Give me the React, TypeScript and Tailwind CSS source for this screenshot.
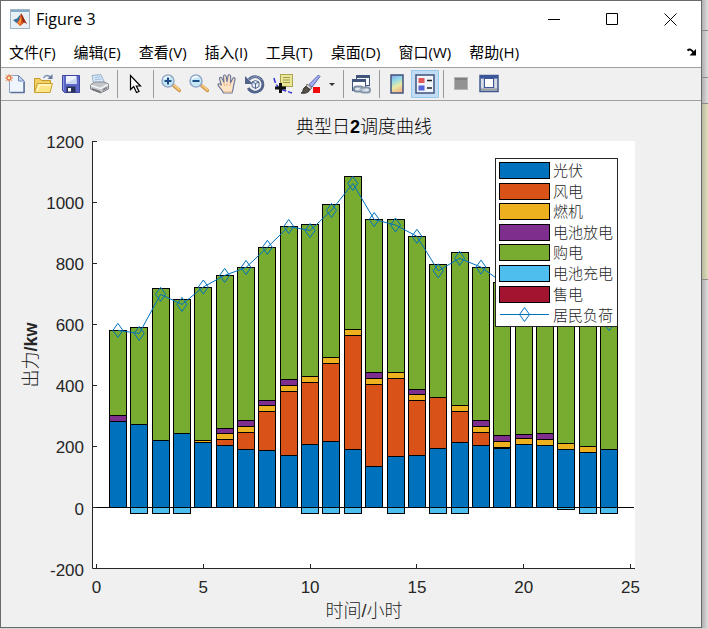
import type { ReactNode } from 'react';

const MENUS = ['文件(F)', '编辑(E)', '查看(V)', '插入(I)', '工具(T)', '桌面(D)', '窗口(W)', '帮助(H)'];

const COLORS = {
  pv: '#0072bd',
  wind: '#d95319',
  gas: '#edb120',
  discharge: '#7e2f8e',
  buy: '#77ac30',
  charge: '#4dbeee',
  sell: '#a2142f',
};

// [pv, wind, gas, discharge, buy, charge] in kW, one row per hour
const HOURS = [
  [282, 0, 0, 20, 278, 0],
  [272, 0, 0, 0, 317, 20],
  [219, 0, 0, 0, 498, 20],
  [242, 0, 0, 0, 439, 20],
  [213, 0, 6, 0, 501, 0],
  [203, 20, 20, 16, 501, 0],
  [190, 56, 20, 20, 501, 0],
  [187, 127, 20, 16, 501, 0],
  [170, 210, 20, 20, 500, 0],
  [206, 203, 20, 0, 498, 20],
  [216, 256, 20, 0, 501, 20],
  [190, 373, 20, 0, 501, 20],
  [134, 269, 20, 20, 501, 0],
  [167, 255, 20, 0, 501, 20],
  [170, 180, 20, 16, 501, 0],
  [193, 167, 0, 0, 436, 20],
  [213, 101, 20, 0, 501, 20],
  [203, 43, 20, 20, 501, 0],
  [193, 3, 20, 20, 501, 0],
  [206, 0, 20, 14, 501, 0],
  [203, 0, 20, 20, 501, 0],
  [190, 0, 20, 0, 501, 7],
  [180, 0, 20, 0, 470, 20],
  [190, 0, 0, 0, 430, 20],
];

const LOAD = [
  580, 570, 698, 665, 722, 760, 786, 852, 920, 907, 973, 1061, 943, 925, 888, 775, 816, 787, 737, 741, 743, 704, 650,
  602,
];

const STACK = [COLORS.pv, COLORS.wind, COLORS.gas, COLORS.discharge, COLORS.buy];

const LEGEND = [
  { name: '光伏', color: COLORS.pv },
  { name: '风电', color: COLORS.wind },
  { name: '燃机', color: COLORS.gas },
  { name: '电池放电', color: COLORS.discharge },
  { name: '购电', color: COLORS.buy },
  { name: '电池充电', color: COLORS.charge },
  { name: '售电', color: COLORS.sell },
];

const px = (hour: number) => 95.5 + hour * 21.36;
const py = (kw: number) => 406.5 - kw * 0.3054;
const snap = (v: number) => Math.floor(v) + 0.5;

const Diamond = ({ x, y }: { x: number; y: number }) => (
  <path d={`M${x} ${y - 7}l5 7l-5 7l-5 -7z`} fill="none" stroke="#0072bd" strokeWidth="1" />
);

const Bar = ({ hour, values }: { hour: number; values: number[] }) => {
  const left = snap(px(hour) - 8.5);
  const charge = values[5];
  let total = 0;
  return (
    <g stroke="#000" strokeWidth="1">
      {STACK.map((color, i) => {
        if (!values[i]) return null;
        const bottom = snap(py(total));
        total += values[i];
        const top = snap(py(total));
        return <rect key={color} x={left} y={top} width="17" height={bottom - top} fill={color} />;
      })}
      {charge > 0 && (
        <rect x={left} y="406.5" width="17" height={snap(py(-charge)) - 406.5} fill={COLORS.charge} />
      )}
    </g>
  );
};

const Chart = () => (
  <svg
    viewBox="0 0 700 526"
    className="block w-full h-auto font-['Liberation_Sans','Noto_Sans_CJK_SC',sans-serif]"
    role="img"
    aria-label="典型日2调度曲线"
  >
    <rect x="92" y="40" width="542" height="428" fill="#fff" />
    {HOURS.map((values, i) => (
      <Bar key={i} hour={i + 1} values={values} />
    ))}
    <path d="M91.5 406.5H633" stroke="#000" />
    <g stroke="#262626" fill="none">
      <path d="M91.5 40V467.5H634" />
      {[0, 5, 10, 15, 20, 25].map((t) => (
        <path key={t} d={`M${snap(px(t))} 467v-4`} />
      ))}
      {[0, 200, 400, 600, 800, 1000, 1200].map((t) => (
        <path key={t} d={`M92 ${snap(py(t))}h4`} />
      ))}
    </g>
    <polyline
      points={LOAD.map((v, i) => `${px(i + 1)},${py(v)}`).join(' ')}
      fill="none"
      stroke="#0072bd"
      strokeWidth="1"
    />
    {LOAD.map((v, i) => (
      <Diamond key={i} x={px(i + 1)} y={py(v)} />
    ))}

    <g fill="#262626" fontSize="17">
      {[0, 5, 10, 15, 20, 25].map((t) => (
        <text key={t} x={px(t)} y="492" textAnchor="middle">
          {t}
        </text>
      ))}
      {[-200, 0, 200, 400, 600, 800, 1000, 1200].map((t) => (
        <text key={t} x="83" y={py(t) + 7} textAnchor="end">
          {t}
        </text>
      ))}
    </g>
    <text x="363" y="32" textAnchor="middle" fontSize="18" fontWeight="300" fill="#000">
      典型日<tspan fontWeight="bold">2</tspan>调度曲线
    </text>
    <text x="363" y="516" textAnchor="middle" fontSize="18" fontWeight="300" fill="#262626">
      时间/小时
    </text>
    <text transform="translate(36 254) rotate(-90)" textAnchor="middle" fontSize="18" fontWeight="300" fill="#262626">
      出力<tspan fontWeight="bold">/kw</tspan>
    </text>

    <rect x="494.5" y="57.5" width="122" height="168" fill="#fff" stroke="#262626" />
    {LEGEND.map((item, i) => {
      const y = Math.round(i * 20.6);
      return (
        <g key={item.name}>
          <rect x="498.5" y={61.5 + y} width="50" height="16" fill={item.color} stroke="#000" />
          <text x="552" y={75 + y} fontSize="15" fontWeight="300" fill="#262626">
            {item.name}
          </text>
        </g>
      );
    })}
    <path d="M499 213.5H548" stroke="#0072bd" />
    <Diamond x={523.5} y={213.5} />
    <text x="552" y="220" fontSize="15" fontWeight="300" fill="#262626">
      居民负荷
    </text>
  </svg>
);

const Icon = ({ children }: { children: ReactNode }) => (
  <svg viewBox="0 0 20 20" className="size-5" fill="none" aria-hidden="true">
    {children}
  </svg>
);

const MatlabLogo = () => (
  <svg viewBox="0 0 20 20" className="size-5" aria-hidden="true">
    <rect x="0.5" y="0.5" width="19" height="19" fill="#e9f0f5" stroke="#9fb4c4" />
    <path d="M1 1h18v2H1z" fill="#82acc9" />
    <path d="M3 11l4-1.500 2.500-3 1.500-2-2 7-2.500 2.500z" fill="#326b9c" />
    <path d="M6.500 14c2-1 3.500-6 4.500-9.500 1.500 1 3 6 6 10.500-2-1.500-3-2-5 .5l-2 1.500c-1-.5-1.500-2.500-3.500-3z" fill="#d95218" />
    <path d="M11 4.500c1.500 1 3 6 6 10.500-2-1.500-3-2-4-1.500z" fill="#8f2417" />
    <path d="M8 13.500c1.500-1 2.300-4 3-6 .7 2 0 6-1 9-.5-1-1-2.500-2-3z" fill="#f5a03c" />
  </svg>
);

const Lens = ({ plus }: { plus?: boolean }) => (
  <Icon>
    <path d="M12.500 11.500l6 5" stroke="#c98f45" strokeWidth="3.500" strokeLinecap="round" />
    <path d="M13 11.300l5.500 4.700" stroke="#f6c87c" strokeWidth="2" strokeLinecap="round" />
    <circle cx="7" cy="7" r="6" fill="#c6e8f7" stroke="#93a8c6" strokeWidth="1.500" />
    <path d="M3 5c1-2 4-3 6-2" stroke="#fff" strokeWidth="1.500" />
    <path d={plus ? 'M3.500 7h7M7 3.500v7' : 'M3.500 7h7'} stroke="#1d4c86" strokeWidth="2" />
  </Icon>
);

const NewIcon = () => (
  <Icon>
    <path d="M4.500 1.500h9l6 5.500v11.500h-15z" fill="#eef5ff" stroke="#8ba2c8" />
    <path d="M5.500 18.500h13.500V8" stroke="#5c719c" strokeWidth="1.500" />
    <path d="M13.500 1.500v5.500h5.500z" fill="#c4d5ef" stroke="#7089b7" />
    <path d="M4 0v8M0 4h8M1 1l6 6M7 1L1 7" stroke="#ecab84" strokeWidth="1.500" />
    <circle cx="4" cy="4" r="2" fill="#ffe9a8" stroke="#d9603c" />
  </Icon>
);

const OpenIcon = () => (
  <Icon>
    <path d="M1.500 17.500v-13h5.500l1.500 2h9v11z" fill="#f1cf62" stroke="#c39b2c" />
    <path d="M1.500 18.500l3-9h15l-2.500 9z" fill="#fbe587" stroke="#c9a030" />
    <path d="M4 17l2.200-6H18" stroke="#fff8ca" strokeWidth="1.500" />
    <path d="M10.500 4c2-3.500 5-3 7-.5" stroke="#7c8fae" strokeWidth="1.500" />
    <path d="M14.500 5h5V0z" fill="#64799c" />
  </Icon>
);

const SaveIcon = () => (
  <Icon>
    <path d="M1.500 1.500h17v17h-15l-2-2z" fill="#5a66c8" stroke="#3d459e" />
    <path d="M2.500 2v14" stroke="#8c98e2" />
    <path d="M5 2h10.500v8H5z" fill="#eef2ff" />
    <path d="M5 9l10.500-5v6H5z" fill="#cdd6f2" />
    <path d="M5.500 12.500h9v6h-9z" fill="#2b3057" />
    <path d="M7 14h3v3.500H7z" fill="#fff" />
  </Icon>
);

const PrintIcon = () => (
  <Icon>
    <path d="M4.500 9L3 1.500l9-1 3.500 8z" fill="#d6e9fb" stroke="#9bb2cc" />
    <path d="M5.500 3.500l6-.7M6 5.700l6.500-.7" stroke="#a3bcd9" />
    <path d="M1.500 11l4-3h9.500l4.500 2v5l-8 4-10-4z" fill="#c3c5c9" stroke="#86898e" />
    <path d="M2 11.500l9.500 3 7.500-4" stroke="#f5f5f5" strokeWidth="1.500" />
    <path d="M3 15l8.500 3" stroke="#6c6f75" strokeWidth="1.500" />
    <path d="M14 16l4-2.500" stroke="#7d8288" strokeWidth="1.500" />
  </Icon>
);

const ArrowIcon = () => (
  <Icon>
    <path d="M5.500 1.500v14l3.200-3 2.800 6 2.500-1-2.700-5.500h4.200z" fill="#fff" stroke="#000" strokeWidth="1.200" />
  </Icon>
);

const HandIcon = () => (
  <Icon>
    <path
      d="M6.500 19c-1-3-4-5-5.500-8 0-2 2-1.500 3.500.5L2.500 5c-.2-2 2-2.300 2.600-.5L7 8.500 6.500 2.500c0-2 2.400-2 2.700 0L10 8l1-6c.4-2 2.700-1.500 2.600.3L13.500 9l2.300-4.500c.9-1.700 2.700-.8 2.200 1L16.500 12c0 3-1 4.500-1.500 7z"
      fill="#ffe4c6"
      stroke="#6f7b9c"
      strokeWidth="1.200"
    />
    <path d="M7 9l.5 3M10 9v3M13.500 9l-.5 3M6.500 18h8" stroke="#e3b48d" />
  </Icon>
);

const RotateIcon = () => (
  <Icon>
    <path d="M4 5.500a7.800 7.800 0 1 1-.8 8.500" stroke="#52648c" strokeWidth="2.800" />
    <path d="M4.500 5.500a7.500 7.500 0 0 1 12 .5" stroke="#93a2c0" />
    <path d="M0 2v8h8z" fill="#52648c" />
    <path d="M7 8l3.500-1.500L14 8v4.500L10.500 14.500 7 12.500z" fill="#e5edf8" stroke="#50648d" />
    <path d="M7 8l3.500 1.500L14 8M10.500 9.500v5" stroke="#50648d" />
  </Icon>
);

const DataTipIcon = () => (
  <Icon>
    <path d="M1 4c1 5 3 9 7 11s6 2 11 4" stroke="#3535d5" strokeWidth="1.500" strokeDasharray="5 2" />
    <rect x="7.500" y="0.500" width="12" height="12" fill="#e9e695" stroke="#a9a552" />
    <path d="M10 3.500h7M10 6h7M10 8.500h7" stroke="#a09b4d" />
    <path d="M7.500 9v10M2 14h11" stroke="#111" strokeWidth="3" />
  </Icon>
);

const BrushIcon = () => (
  <Icon>
    <path d="M8 10.500L17.500 1l1.500 1.500L11 13z" fill="#a3aff0" stroke="#5d66b4" />
    <path d="M6 10l5 4-2 1.500-4-3z" fill="#ddd" stroke="#777" />
    <path d="M0 19c3-1 1-5 5-6.500l4 3c-1 3-5 4.500-9 3.500z" fill="#555048" stroke="#35322e" />
    <rect x="12" y="13" width="7" height="6" fill="#f00a0a" />
  </Icon>
);

const LinkIcon = () => (
  <Icon>
    <rect x="5.500" y="1.500" width="13" height="10" fill="#f4f8ff" stroke="#40547c" />
    <path d="M5 2.500h14" stroke="#40547c" strokeWidth="3" />
    <rect x="1.500" y="5.500" width="13" height="11" fill="#fff" stroke="#40547c" />
    <path d="M1 6.500h14" stroke="#40547c" strokeWidth="3" />
    <rect x="3" y="12.500" width="9" height="5" rx="2.500" fill="#dfe6ee" stroke="#7b8da3" strokeWidth="2" />
    <rect x="10" y="13.500" width="9" height="5" rx="2.500" fill="#dfe6ee" stroke="#8496aa" strokeWidth="2" />
    <path d="M8 15.500h6" stroke="#b4c1d1" strokeWidth="1.500" />
  </Icon>
);

const ColorbarIcon = () => (
  <Icon>
    <defs>
      <linearGradient id="jet" x1="0" y1="0" x2="0.300" y2="1">
        <stop offset="0" stopColor="#8c9fe0" />
        <stop offset="0.350" stopColor="#8fd8ea" />
        <stop offset="0.700" stopColor="#e9eaa4" />
        <stop offset="1" stopColor="#f0bd8c" />
      </linearGradient>
    </defs>
    <rect x="4" y="1" width="12" height="18" fill="url(#jet)" stroke="#40527c" strokeWidth="1.500" />
  </Icon>
);

const LegendIcon = () => (
  <Icon>
    <rect x="1" y="1" width="18" height="18" fill="#f0f4fb" stroke="#40527c" strokeWidth="1.500" />
    <rect x="3.500" y="4" width="6" height="5" fill="#e0595a" />
    <rect x="3.500" y="11.500" width="6" height="5" fill="#5862d8" />
    <path d="M12 6.500h5M12 14h5" stroke="#222" strokeWidth="1.500" />
  </Icon>
);

const HideToolsIcon = () => (
  <Icon>
    <rect x="3.500" y="3.500" width="13" height="12" fill="#929292" stroke="#b4b4b4" />
    <path d="M4 5h12" stroke="#7f7f7f" strokeWidth="2" />
  </Icon>
);

const ShowToolsIcon = () => (
  <Icon>
    <rect x="1" y="1.500" width="18" height="16" fill="#c2cad3" stroke="#41588f" strokeWidth="1.500" />
    <path d="M1 3h18" stroke="#3c569b" strokeWidth="3" />
    <rect x="5.500" y="4.500" width="9" height="9" fill="#fff" stroke="#3c569b" />
    <path d="M3 5v9M17 5v9" stroke="#e9eff5" />
    <path d="M2 15.500h16" stroke="#9a9fa8" strokeWidth="2" />
  </Icon>
);

const Tool = ({ label, active, children }: { label: string; active?: boolean; children: ReactNode }) => (
  <button
    type="button"
    aria-label={label}
    className={
      active
        ? 'flex h-7 w-7 shrink-0 items-center justify-center border border-[#99c9ef] bg-[#c2dcf3]'
        : 'flex h-7 w-7 shrink-0 items-center justify-center'
    }
  >
    {children}
  </button>
);

const Separator = () => (
  <div className="flex h-7 w-2 shrink-0 justify-center">
    <div className="w-px bg-[#999]" />
  </div>
);

const Toolbar = () => (
  <div className="flex h-[34px] items-center border-y border-[#a0a0a0] bg-[#f0f0f0]">
    <Tool label="新建"><NewIcon /></Tool>
    <Tool label="打开"><OpenIcon /></Tool>
    <Tool label="保存"><SaveIcon /></Tool>
    <Tool label="打印"><PrintIcon /></Tool>
    <Separator />
    <Tool label="选择"><ArrowIcon /></Tool>
    <Separator />
    <Tool label="放大"><Lens plus /></Tool>
    <Tool label="缩小"><Lens /></Tool>
    <Tool label="平移"><HandIcon /></Tool>
    <Tool label="旋转"><RotateIcon /></Tool>
    <Tool label="数据游标"><DataTipIcon /></Tool>
    <Tool label="刷亮"><BrushIcon /></Tool>
    <button type="button" aria-label="刷亮选项" className="flex h-7 w-3.5 shrink-0 items-center justify-center">
      <svg viewBox="0 0 6 3" className="h-[3px] w-1.5" aria-hidden="true">
        <path d="M0 0h6L3 3z" fill="#333" />
      </svg>
    </button>
    <Separator />
    <Tool label="链接绘图"><LinkIcon /></Tool>
    <Separator />
    <Tool label="颜色栏"><ColorbarIcon /></Tool>
    <Tool label="图例" active><LegendIcon /></Tool>
    <Separator />
    <Tool label="隐藏绘图工具"><HideToolsIcon /></Tool>
    <Tool label="显示绘图工具"><ShowToolsIcon /></Tool>
  </div>
);

const WindowButton = ({ label, d }: { label: string; d: string }) => (
  <button type="button" aria-label={label} className="flex h-9 w-[58px] items-center justify-center">
    <svg viewBox="0 0 13 13" className="size-[13px]" fill="none" stroke="#000" aria-hidden="true">
      <path d={d} />
    </svg>
  </button>
);

const TitleBar = () => (
  <header className="flex h-9 items-center bg-white pr-0.5 pl-[9px]">
    <MatlabLogo />
    <h1 className="ml-[6px] flex-1 text-[16px] leading-5 text-black">Figure 3</h1>
    <WindowButton label="最小化" d="M0 6.500h12" />
    <WindowButton label="最大化" d="M0.500 0.500h11v11h-11z" />
    <WindowButton label="关闭" d="M0.500 0.500l12 12M12.500 0.500l-12 12" />
  </header>
);

const MenuBar = () => (
  <nav className="flex h-[30px] items-center gap-[18px] bg-white pr-1 pl-2 text-[15px] leading-5 text-black">
    {MENUS.map((menu) => (
      <button key={menu} type="button" className="whitespace-nowrap">
        {menu}
      </button>
    ))}
    <button type="button" aria-label="停靠" className="ml-auto">
      <svg viewBox="0 0 10 8" className="h-2 w-2.5" fill="none" aria-hidden="true">
        <path d="M0.500 2.500c2-2 4-1 6 2" stroke="#000" strokeWidth="2" />
        <path d="M9 1v6.500H2.500z" fill="#000" />
      </svg>
    </button>
  </nav>
);

export default function App() {
  return (
    <div className="flex bg-[#d4d4d4] pb-px font-['Open_Sans','Noto_Sans_CJK_SC',sans-serif]">
      <main className="min-w-0 flex-1 border border-[#6a6a6c] bg-[#f0f0f0]">
        <TitleBar />
        <MenuBar />
        <Toolbar />
        <Chart />
      </main>
      <div className="flex w-1.5 flex-col bg-linear-to-r from-[#b0b0b0] to-[#dedede]">
        <div className="h-[31px] border-b border-[#8c8c8c]" />
        <div className="h-[47px] border-b border-[#8c8c8c]" />
        <div className="h-[26px] border-b border-[#8c8c8c]" />
        <div className="h-[176px] border-b border-[#8c8c8c] bg-linear-to-r from-[#b9b99c] to-[#e0e0c0]" />
      </div>
    </div>
  );
}
